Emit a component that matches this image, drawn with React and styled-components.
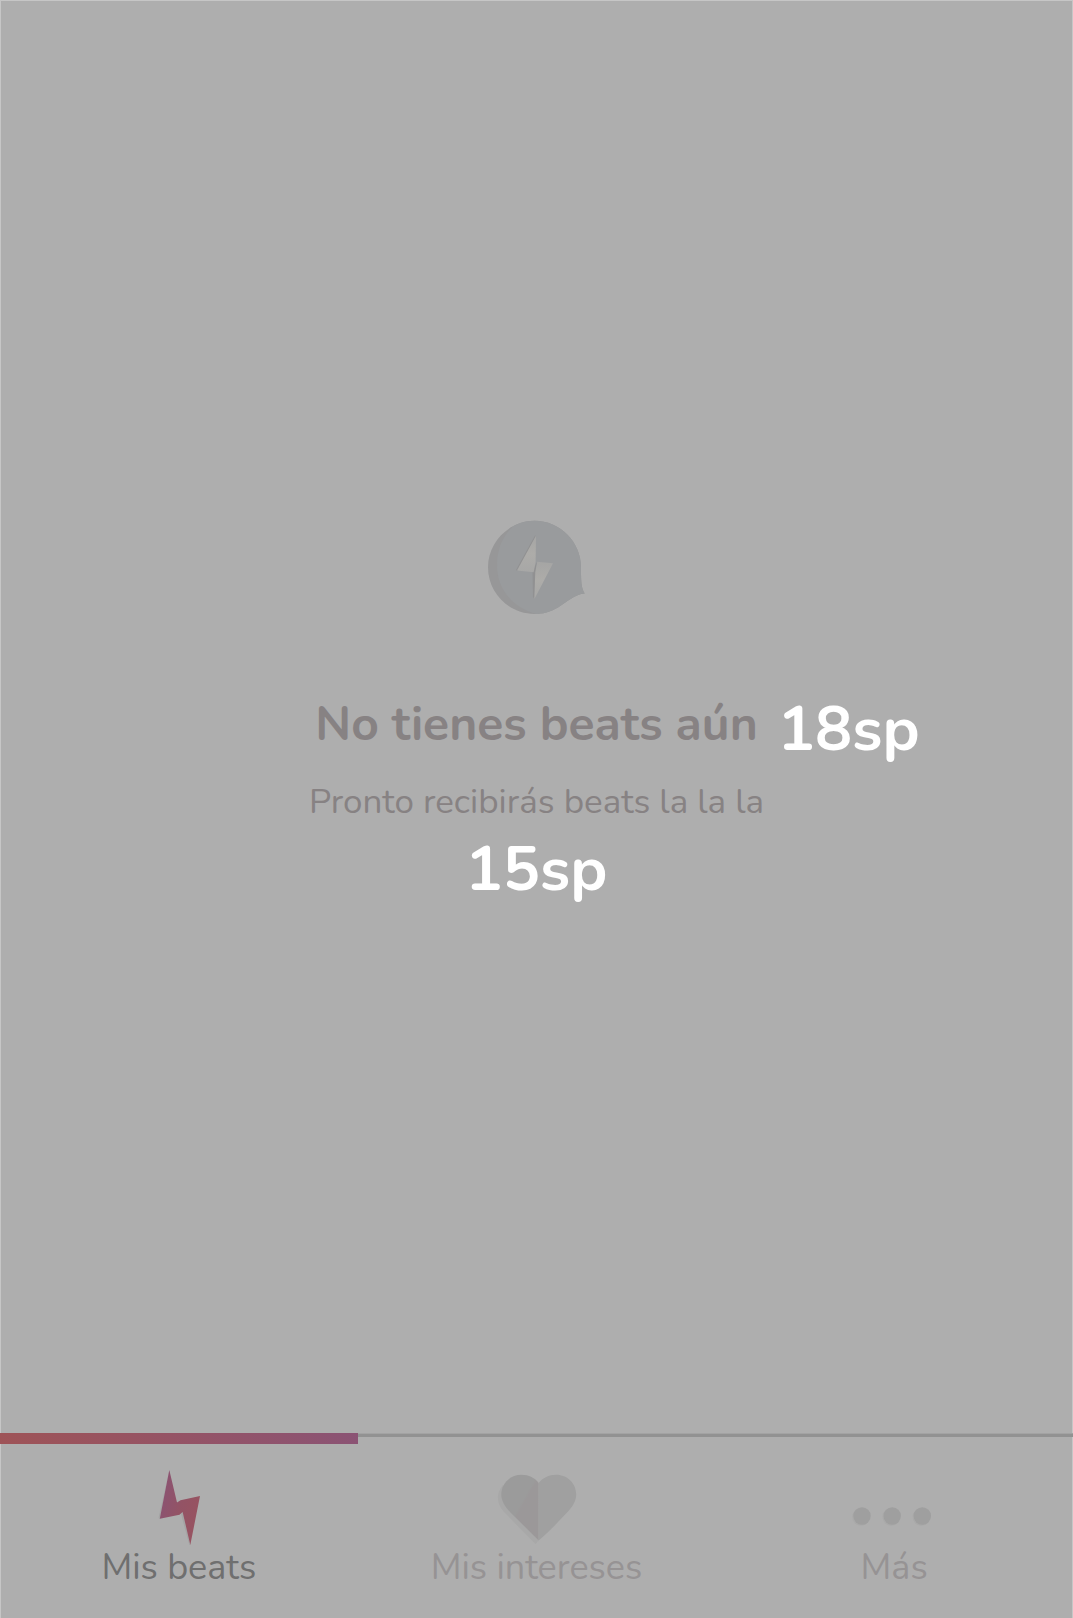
import React from 'react';
import styled, { createGlobalStyle, css } from 'styled-components';

const GlobalStyle = createGlobalStyle`
  *, *::before, *::after { box-sizing: border-box; }
  body {
    margin: 0;
    background: #aeaeae;
    font-family: Nunito, Lato, "Open Sans", sans-serif;
  }
`;

const Screen = styled.div`
  min-height: 100vh;
  display: flex;
  flex-direction: column;
  background: #aeaeae;
  box-shadow: inset 1px 1px #c6c6c6, inset -1px 0 #c6c6c6;
`;

const EmptyState = styled.main`
  flex: 1;
  display: flex;
  flex-direction: column;
  align-items: center;
  justify-content: center;
  text-align: center;
  color: #878283;
`;

const BubbleIcon = styled.svg`
  width: 97px;
  height: 94px;
  margin-bottom: 78px;
`;

const TitleRow = styled.div`
  position: relative;
  margin-bottom: 22px;
`;

const Title = styled.h1`
  margin: 0;
  font-size: 48px;
  line-height: 64px;
  font-weight: 700;
`;

const Subtitle = styled.p`
  margin: 0;
  font-size: 35px;
  line-height: 48px;
  font-weight: 400;
`;

const SizeNote = styled.span`
  color: #fff;
  font-size: 62px;
  line-height: 88px;
  font-weight: 700;
  ${({ $beside }) =>
    $beside &&
    css`
      position: absolute;
      left: 100%;
      top: -6px;
      margin-left: 20px;
    `}
`;

const TabBar = styled.nav`
  display: grid;
  grid-template-columns: repeat(3, 1fr);
`;

const Tab = styled.a`
  display: flex;
  flex-direction: column;
  align-items: center;
  padding-bottom: 28px;
  font-size: 36px;
  line-height: 44px;
  font-weight: 400;
  text-decoration: none;
  color: ${({ $active }) => ($active ? '#6f6f6f' : '#969394')};
`;

const Indicator = styled.span`
  width: 100%;
  height: 11px;
  margin-bottom: 26px;
  background: ${({ $active }) =>
    $active
      ? 'linear-gradient(90deg, #9e5357, #8b5374)'
      : 'linear-gradient(#a3a3a3 1px, #929292 1px, #929292 4px, transparent 4px)'};
`;

const TabIcon = styled.svg`
  width: 80px;
  height: 76px;
  overflow: visible;
`;

function BoltIcon() {
  return (
    <TabIcon viewBox="-1 10 80 76" aria-hidden="true">
      <defs>
        <linearGradient id="boltFill" x1="0" y1="0.3" x2="1" y2="0.7">
          <stop offset="0" stopColor="#8a5373" />
          <stop offset="0.5" stopColor="#935365" />
          <stop offset="1" stopColor="#985360" />
        </linearGradient>
      </defs>
      <path d="M28.5 14 L18.5 58 L20 59 L29.3 10Z M41 54 L49.3 85 L50.3 85 L42.6 52Z" fill="#a4a4a4" />
      <path
        d="M29.3 10 L37 42.6 L40.5 40.2 L60 36 L50.3 85 L42.6 52 L39.5 54.8 L19.8 58.8Z"
        fill="url(#boltFill)"
      />
    </TabIcon>
  );
}

function HeartIcon() {
  return (
    <TabIcon viewBox="96 50 80 76" aria-hidden="true">
      <defs>
        <linearGradient id="heartLeft" x1="0.3" y1="0.3" x2="0.7" y2="0.7">
          <stop offset="0.45" stopColor="#9b9b9b" />
          <stop offset="0.55" stopColor="#9b9899" />
        </linearGradient>
      </defs>
      <path
        d="M103 65 C96 73 96 83 104 92 L135.5 124 L138.7 120.5Z"
        fill="#a8a8a8"
      />
      <path
        d="M138.7 63 C135 58 129 54.8 121.5 54.8 C110 54.8 101.3 63.5 101.3 74.5 C101.3 81 105 87 110 92 L138.7 120.5Z"
        fill="url(#heartLeft)"
      />
      <path
        d="M138.7 63 C142.5 58 149 54.8 156 54.8 C167.5 54.8 176.2 63.5 176.2 74.5 C176.2 81 172.5 87 167.5 92 C158 102 149 112 138.7 120.5Z"
        fill="#a0a0a0"
      />
    </TabIcon>
  );
}

function DotsIcon() {
  return (
    <TabIcon viewBox="34 50 80 76" aria-hidden="true">
      {[42, 72.2, 102.3].map((x) => (
        <g key={x}>
          <circle cx={x - 1} cy="97" r="8.7" fill="#a9a9a9" />
          <circle cx={x} cy="96" r="8.7" fill="#9f9f9f" />
        </g>
      ))}
    </TabIcon>
  );
}

const tabs = [
  { id: 'beats', label: 'Mis beats', Icon: BoltIcon, active: true },
  { id: 'intereses', label: 'Mis intereses', Icon: HeartIcon },
  { id: 'mas', label: 'Más', Icon: DotsIcon },
];

export default function App() {
  return (
    <Screen>
      <GlobalStyle />
      <EmptyState>
        <BubbleIcon viewBox="18 15 97 94" aria-hidden="true">
          <defs>
            <clipPath id="bubble">
              <path d="M111 62 C111 75 111 83 114.7 88.5 C105 89 97 97 88 102.5 C80 107 73 109 64.5 109 C39 109 18 88 18 62.3 C18 37 39 15.8 64.5 15.8 C90 15.8 111 37 111 62Z" />
            </clipPath>
            <linearGradient id="boltPale" x1="0" y1="0" x2="0" y2="1">
              <stop offset="0" stopColor="#a5a5a4" />
              <stop offset="0.5" stopColor="#adaca9" />
              <stop offset="1" stopColor="#a7a7a6" />
            </linearGradient>
          </defs>
          <g clipPath="url(#bubble)">
            <rect x="18" y="15" width="97" height="94" fill="#979798" />
            <path
              d="M52 15 C36 24 27 40 27 60 C27 84 42 102 66 109 L116 109 L116 15Z"
              fill="#999b9d"
            />
          </g>
          <path d="M65 30.5 L46 65 L47.5 66 L66 31Z M62.5 67 L63 92 L64.5 94 L66.8 57Z" fill="#919192" />
          <path d="M66 30.7 L47 65.6 L63.6 67.2 L65.6 57Z" fill="url(#boltPale)" />
          <path d="M67.3 56.7 L83 58.3 L64.3 94.3 L65.3 67Z" fill="url(#boltPale)" />
        </BubbleIcon>
        <TitleRow>
          <Title>No tienes beats aún</Title>
          <SizeNote $beside>18sp</SizeNote>
        </TitleRow>
        <Subtitle>Pronto recibirás beats la la la</Subtitle>
        <SizeNote>15sp</SizeNote>
      </EmptyState>
      <TabBar>
        {tabs.map(({ id, label, Icon, active }) => (
          <Tab key={id} href={`#${id}`} $active={active} aria-current={active ? 'page' : undefined}>
            <Indicator $active={active} />
            <Icon />
            {label}
          </Tab>
        ))}
      </TabBar>
    </Screen>
  );
}
